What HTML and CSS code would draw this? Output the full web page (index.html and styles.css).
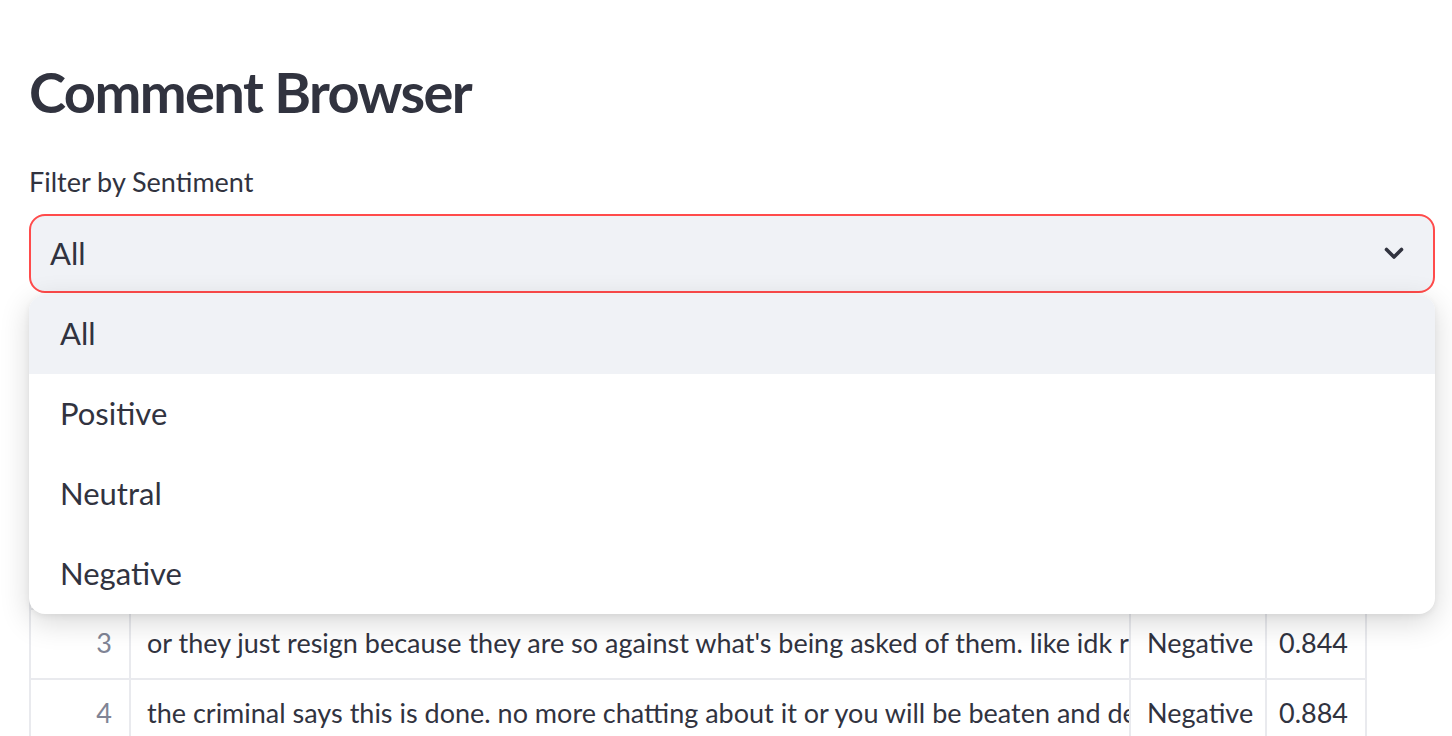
FILE: index.html
```html
<!DOCTYPE html>
<html lang="en">
<head>
<meta charset="utf-8">
<title>Comment Browser</title>
<link rel="stylesheet" href="styles.css">
</head>
<body>
<main class="main">
  <h1 class="title">Comment Browser</h1>
  <div class="label">Filter by Sentiment</div>
  <div class="select-wrap">
    <div class="select">
      <span class="select-value">All</span>
      <svg class="chevron" width="20" height="13" viewBox="0 0 20 13" aria-hidden="true"><path d="M2.5 2.5 L10 10 L17.5 2.5" fill="none" stroke="#31333f" stroke-width="3.6" stroke-linecap="round" stroke-linejoin="round"/></svg>
    </div>
    <ul class="menu">
      <li class="option active">All</li>
      <li class="option">Positive</li>
      <li class="option">Neutral</li>
      <li class="option">Negative</li>
    </ul>
  </div>
  <div class="table">
    <div class="row head">
      <div class="cell idx"></div>
      <div class="cell text">comment</div>
      <div class="cell sent">sentiment</div>
      <div class="cell num">score</div>
    </div>
    <div class="row">
      <div class="cell idx">0</div>
      <div class="cell text">this is honestly one of the best explanations i have seen on this topic, thank you so much</div>
      <div class="cell sent">Positive</div>
      <div class="cell num">0.912</div>
    </div>
    <div class="row">
      <div class="cell idx">1</div>
      <div class="cell text">i don't really know what to think about this, it seems like there are two sides to it</div>
      <div class="cell sent">Neutral</div>
      <div class="cell num">0.701</div>
    </div>
    <div class="row">
      <div class="cell idx">2</div>
      <div class="cell text">this is exactly the kind of thing that makes people lose trust in the whole system</div>
      <div class="cell sent">Negative</div>
      <div class="cell num">0.793</div>
    </div>
    <div class="row">
      <div class="cell idx">3</div>
      <div class="cell text">or they just resign because they are so against what's being asked of them. like idk really what else they could do</div>
      <div class="cell sent">Negative</div>
      <div class="cell num">0.844</div>
    </div>
    <div class="row">
      <div class="cell idx">4</div>
      <div class="cell text">the criminal says this is done. no more chatting about it or you will be beaten and deported and that is the end of it</div>
      <div class="cell sent">Negative</div>
      <div class="cell num">0.884</div>
    </div>
  </div>
</main>
</body>
</html>
```

FILE: styles.css
```css
html, body {
  margin: 0;
  padding: 0;
  overflow: hidden;
  background: #ffffff;
}

body {
  font-family: "Lato", "Noto Sans", sans-serif;
  color: #31333f;
}

.main {
  padding: 0 17px 0 29px;
}

.title {
  margin: 56px 0 0;
  font-size: 56px;
  line-height: 72px;
  font-weight: 700;
  color: #31333f;
  letter-spacing: -1.6px;
}

.label {
  margin-top: 37px;
  font-size: 27px;
  line-height: 34px;
  color: #31333f;
}

.select-wrap {
  position: relative;
  margin-top: 15px;
}

.select {
  box-sizing: border-box;
  height: 79px;
  display: flex;
  align-items: center;
  justify-content: space-between;
  padding: 0 29px 2px 19px;
  background: #f0f2f6;
  border: 2px solid #ff4b4b;
  border-radius: 16px;
  font-size: 31px;
}

.chevron {
  display: block;
  margin-top: 2px;
}

.menu {
  position: absolute;
  left: 0;
  right: 0;
  top: calc(100% + 2px);
  margin: 0;
  padding: 0;
  list-style: none;
  background: #ffffff;
  border-radius: 16px;
  overflow: hidden;
  box-shadow: 0 8px 30px rgba(0, 0, 0, 0.16), 0 2px 6px rgba(0, 0, 0, 0.06);
  z-index: 5;
}

.option {
  box-sizing: border-box;
  height: 80px;
  display: flex;
  align-items: center;
  padding: 0 0 3px 31px;
  font-size: 31px;
  color: #31333f;
}

.option:first-child {
  height: 79px;
}

.option.active {
  background: #f0f2f6;
}

.table {
  margin-top: 35px;
  width: 1338px;
  border-top: 2px solid #e9eaee;
  border-left: 2px solid #e9eaee;
  box-sizing: border-box;
}

.row {
  display: grid;
  grid-template-columns: 100px 1000px 136px 100px;
  height: 70px;
  border-bottom: 2px solid #e9eaee;
  box-sizing: border-box;
}

.cell {
  display: flex;
  align-items: center;
  padding-bottom: 3px;
  font-size: 27px;
  white-space: nowrap;
  overflow: hidden;
  border-right: 2px solid #e9eaee;
  box-sizing: border-box;
}

.cell.idx {
  justify-content: flex-end;
  padding-right: 17px;
  color: #808495;
}

.cell.text {
  padding-left: 16px;
}

.cell.sent {
  padding-left: 16px;
}

.cell.num {
  justify-content: flex-end;
  padding-right: 17px;
}

.head .cell {
  color: #808495;
}
```
